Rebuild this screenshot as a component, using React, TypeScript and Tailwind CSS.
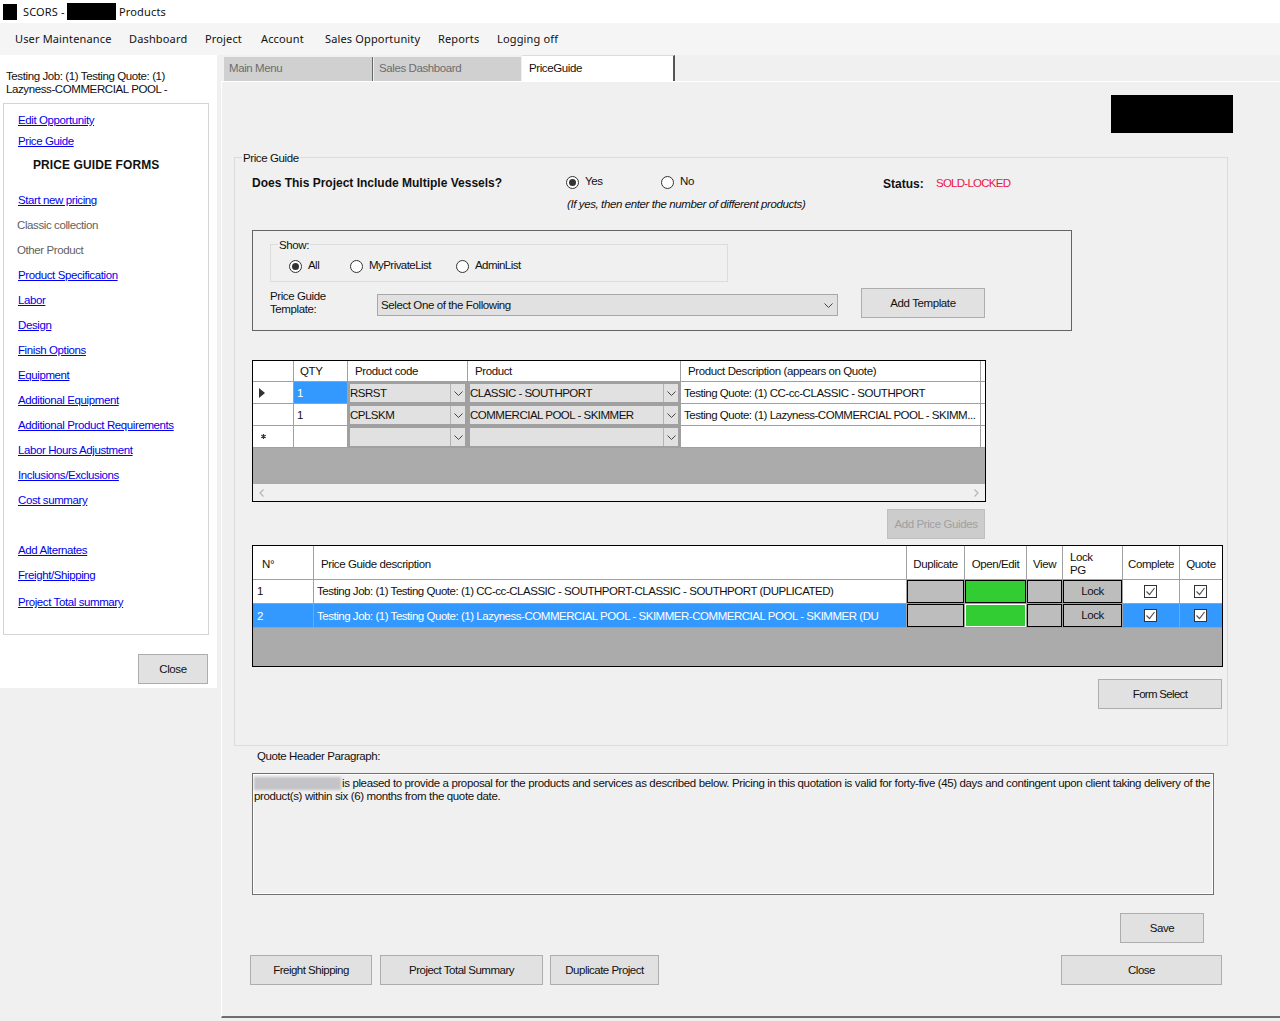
import type { ReactNode } from "react";

const menu = [
  { label: "User Maintenance", w: "w-[114px]" },
  { label: "Dashboard", w: "w-[76px]" },
  { label: "Project", w: "w-[56px]" },
  { label: "Account", w: "w-[64px]" },
  { label: "Sales Opportunity", w: "w-[113px]" },
  { label: "Reports", w: "w-[59px]" },
  { label: "Logging off", w: "w-[80px]" },
];

const linksA = [
  { t: "Start new pricing", on: true },
  { t: "Classic collection", on: false },
  { t: "Other Product", on: false },
  { t: "Product Specification", on: true },
  { t: "Labor", on: true },
  { t: "Design", on: true },
  { t: "Finish Options", on: true },
  { t: "Equipment", on: true },
  { t: "Additional Equipment", on: true },
  { t: "Additional Product Requirements", on: true },
  { t: "Labor Hours Adjustment", on: true },
  { t: "Inclusions/Exclusions", on: true },
  { t: "Cost summary", on: true },
];

function Btn({ className, children }: { className: string; children: ReactNode }) {
  return (
    <button className={"flex items-center justify-center border border-[#adadad] bg-[#e1e1e1] pt-[1px] text-[#111] " + className}>
      {children}
    </button>
  );
}

function SideLink({ t, on }: { t: string; on: boolean }) {
  if (!on) {
    return <div className="h-[25px] pl-[14px] leading-[25px] text-[#5f5f5f]">{t}</div>;
  }
  return <div className="h-[25px] pl-[15px] leading-[25px] text-[#0000ee] underline">{t}</div>;
}

function Radio({ on, label, className }: { on?: boolean; label: string; className: string }) {
  return (
    <div className={"flex h-[16px] items-center " + className}>
      <span className="flex h-[13px] w-[13px] items-center justify-center rounded-full border border-[#333] bg-white">
        {on && <span className="h-[7px] w-[7px] rounded-full bg-[#333]" />}
      </span>
      <span className="ml-[6px]">{label}</span>
    </div>
  );
}

function Chevron() {
  return (
    <svg width="9" height="5" viewBox="0 0 9 5" className="shrink-0">
      <path d="M0.5 0.5 L4.5 4.5 L8.5 0.5" fill="none" stroke="#444" strokeWidth="1" />
    </svg>
  );
}

function Combo({ text }: { text?: string }) {
  return (
    <div className="flex h-full items-stretch border-2 border-[#a0a0a0] bg-[#e1e1e1]">
      <div className="flex-1 overflow-hidden whitespace-nowrap leading-[18px] tracking-[-0.5px]">{text}</div>
      <div className="flex w-[15px] items-center justify-center border-l border-[#b4b4b4]">
        <Chevron />
      </div>
    </div>
  );
}

function Check() {
  return (
    <span className="flex h-[13px] w-[13px] items-center justify-center border border-[#333] bg-white">
      <svg width="11" height="11" viewBox="0 0 11 11">
        <path d="M1.5 5.5 L4.5 8.5 L9.5 2" fill="none" stroke="#555" strokeWidth="1.2" />
      </svg>
    </span>
  );
}

function ProductRow({
  mark,
  qty,
  selected,
  code,
  product,
  desc,
}: {
  mark?: ReactNode;
  qty?: string;
  selected?: boolean;
  code?: string;
  product?: string;
  desc?: string;
}) {
  return (
    <>
      <div className="flex items-center border-r border-b border-[#a0a0a0] bg-white pl-[6px]">{mark}</div>
      <div className={"border-r border-b border-[#a0a0a0] pl-[3px] leading-[22px] " + (selected ? "bg-[#3399ff] text-white" : "bg-white")}>{qty}</div>
      <div className="border-r border-[#a0a0a0] bg-white"><Combo text={code} /></div>
      <div className="border-r border-[#a0a0a0] bg-white"><Combo text={product} /></div>
      <div className="overflow-hidden whitespace-nowrap border-r border-b border-[#a0a0a0] bg-white pl-[3px] leading-[22px] tracking-[-0.47px]">{desc}</div>
      <div className="border-b border-[#a0a0a0] bg-white" />
    </>
  );
}

function GuideRow({ n, desc, active }: { n: string; desc: string; active?: boolean }) {
  const bg = active ? "bg-[#3399ff] text-white leading-[24px]" : "bg-white leading-[23px]";
  const wrap = "border-r border-b border-[#a0a0a0]";
  const gray = "h-full border border-black bg-[#bdbdbd]";
  return (
    <>
      <div className={"pl-[4px] " + wrap + " " + bg}>{n}</div>
      <div className={"overflow-hidden whitespace-nowrap pl-[3px] tracking-[-0.47px] " + wrap + " " + bg}>{desc}</div>
      <div className={wrap}><div className={gray} /></div>
      <div className={wrap}>
        <div className={active ? "h-full border border-white bg-[#32cd32]" : "h-full border border-black bg-[#32cd32]"} />
      </div>
      <div className={wrap}><div className={gray} /></div>
      <div className={wrap}><div className={"flex items-center justify-center " + gray}>Lock</div></div>
      <div className={"flex items-center justify-center pr-[1px] " + wrap + " " + bg}><Check /></div>
      <div className={"flex items-center justify-center border-b border-[#a0a0a0] pr-[1px] " + bg}><Check /></div>
    </>
  );
}

export default function App() {
  return (
    <div className="flex h-[1021px] w-[1280px] flex-col overflow-hidden bg-white font-['Liberation_Sans',Arial,sans-serif] text-[11.5px] tracking-[-0.4px] text-[#111]">
      {/* title bar */}
      <div className="flex h-[23px] shrink-0 items-center bg-white font-['Noto_Sans',sans-serif] text-[11px] tracking-[0.15px]">
        <div className="ml-[3px] h-[16px] w-[14px] bg-black" />
        <span className="ml-[6px] mt-[1px] w-[44px] whitespace-nowrap">SCORS -</span>
        <div className="h-[17px] w-[49px] bg-black" />
        <span className="ml-[3px] mt-[1px]">Products</span>
      </div>

      {/* menu */}
      <div className="flex h-[32px] shrink-0 items-center bg-[#f5f5f5] pl-[15px] font-['Noto_Sans',sans-serif] text-[11px] tracking-[0.15px]">
        {menu.map((m) => (
          <span key={m.label} className={"whitespace-nowrap " + m.w}>{m.label}</span>
        ))}
      </div>

      <div className="flex min-h-0 flex-1">
        {/* left side */}
        <div className="flex w-[217px] shrink-0 flex-col bg-[#f0f0f0]">
          <div className="h-[633px] bg-white">
            <div className="h-[48px] pl-[6px] pt-[15px] leading-[13px]">
              Testing Job: (1) Testing Quote: (1)
              <br />
              Lazyness-COMMERCIAL POOL -
            </div>
            <div className="ml-[3px] h-[532px] w-[206px] border border-[#d4d4d4] pt-[6px]">
              <div className="h-[21px] pl-[14px] leading-[20px] text-[#0000ee] underline">Edit Opportunity</div>
              <div className="h-[21px] pl-[14px] leading-[20px] text-[#0000ee] underline">Price Guide</div>
              <div className="mt-[3px] h-[20px] pl-[29px] text-[12px] leading-[20px] font-bold tracking-[0.1px]">PRICE GUIDE FORMS</div>
              <div className="mt-[13px] -ml-[1px]">
                {linksA.map((l) => (
                  <SideLink key={l.t} t={l.t} on={l.on} />
                ))}
              </div>
              <div className="mt-[25px] -ml-[1px]">
                <SideLink t="Add Alternates" on />
                <SideLink t="Freight/Shipping" on />
                <div className="mt-[2px]"><SideLink t="Project Total summary" on /></div>
              </div>
            </div>
            <div className="mt-[19px] ml-[138px]">
              <Btn className="h-[30px] w-[70px]">Close</Btn>
            </div>
          </div>
        </div>

        {/* right side */}
        <div className="flex min-w-0 flex-1 flex-col bg-[#f0f0f0] pl-[4px]">
          <div className="flex h-[27px] shrink-0 items-end border-b border-white pl-[3px]">
            <div className="flex h-[24px] w-[149px] items-center border-r border-[#666] bg-[#d0d0d0] pl-[5px] text-[#6d6d6d]">Main Menu</div>
            <div className="ml-[1px] flex h-[24px] w-[147px] items-center bg-[#d0d0d0] pl-[5px] text-[#6d6d6d]">Sales Dashboard</div>
            <div className="ml-[1px] flex h-[26px] w-[153px] items-center border-t border-r-2 border-t-[#dcdcdc] border-r-[#555] bg-white pt-[1px] pl-[7px]">PriceGuide</div>
          </div>

          <div className="h-[936px] shrink-0 border-b-2 border-l border-b-[#6e6e6e] border-l-white bg-[#f0f0f0]">
            <div className="mt-[13px] ml-[889px] h-[38px] w-[122px] bg-black" />

            {/* price guide group */}
            <div className="relative mt-[24px] ml-[12px] h-[589px] w-[994px] border border-[#dcdcdc] pl-[17px]">
              <span className="absolute -top-[7px] left-[7px] bg-[#f0f0f0] px-[1px] leading-[14px]">Price Guide</span>

              <div className="mt-[17px] flex h-[16px] items-center">
                <div className="w-[314px] text-[12px] font-bold tracking-normal">Does This Project Include Multiple Vessels?</div>
                <Radio on label="Yes" className="-mt-[2px] w-[95px]" />
                <Radio label="No" className="-mt-[2px] w-[222px]" />
                <div className="mt-[2px] w-[53px] text-[12px] font-bold tracking-normal">Status:</div>
                <div className="mt-[2px] tracking-[-0.75px] text-[#ea1748]">SOLD-LOCKED</div>
              </div>
              <div className="mt-[5px] ml-[315px] h-[16px] italic leading-[16px]">(If yes, then enter the number of different products)</div>

              {/* template box */}
              <div className="mt-[18px] h-[101px] w-[820px] border border-[#646464]">
                <div className="relative mt-[13px] ml-[17px] h-[38px] w-[458px] border border-[#dcdcdc] pt-[13px] pl-[18px]">
                  <span className="absolute -top-[7px] left-[7px] bg-[#f0f0f0] px-[1px] leading-[14px]">Show:</span>
                  <div className="flex tracking-[-0.55px]">
                    <Radio on label="All" className="w-[61px]" />
                    <Radio label="MyPrivateList" className="w-[106px]" />
                    <Radio label="AdminList" className="w-[100px]" />
                  </div>
                </div>
                <div className="mt-[6px] ml-[17px] flex h-[30px] items-start">
                  <div className="mt-[2px] w-[107px] leading-[13px]">
                    Price Guide
                    <br />
                    Template:
                  </div>
                  <div className="mt-[6px] flex h-[22px] w-[461px] items-center justify-between border border-[#a8a8a8] bg-[#e1e1e1] pt-[1px] pr-[4px] pl-[3px]">
                    <span>Select One of the Following</span>
                    <Chevron />
                  </div>
                  <Btn className="ml-[23px] h-[30px] w-[124px]">Add Template</Btn>
                </div>
              </div>

              {/* products grid */}
              <div className="mt-[29px] h-[142px] w-[734px] border border-black">
                <div className="grid grid-cols-[41px_54px_120px_213px_300px_4px] grid-rows-[21px_22px_22px_22px]">
                  <div className="border-r border-b border-[#a0a0a0] bg-white" />
                  <div className="border-r border-b border-[#a0a0a0] bg-white pl-[6px] leading-[20px]">QTY</div>
                  <div className="border-r border-b border-[#a0a0a0] bg-white pl-[7px] leading-[20px]">Product code</div>
                  <div className="border-r border-b border-[#a0a0a0] bg-white pl-[7px] leading-[20px]">Product</div>
                  <div className="border-r border-b border-[#a0a0a0] bg-white pl-[7px] leading-[20px]">Product Description (appears on Quote)</div>
                  <div className="border-b border-[#a0a0a0] bg-white" />
                  <ProductRow
                    mark={<svg width="6" height="10" viewBox="0 0 6 10"><path d="M0 0 L6 5 L0 10 Z" fill="#333" /></svg>}
                    qty="1"
                    selected
                    code="RSRST"
                    product="CLASSIC - SOUTHPORT"
                    desc="Testing Quote: (1) CC-cc-CLASSIC - SOUTHPORT"
                  />
                  <ProductRow qty="1" code="CPLSKM" product="COMMERCIAL POOL - SKIMMER" desc="Testing Quote: (1) Lazyness-COMMERCIAL POOL - SKIMM..." />
                  <ProductRow mark={<svg width="5" height="5" viewBox="0 0 5 5" className="ml-[2px]"><path d="M2.5 0 V5 M0.3 1.2 L4.7 3.8 M4.7 1.2 L0.3 3.8" stroke="#333" strokeWidth="1.2" /></svg>} />
                </div>
                <div className="h-[36px] bg-[#ababab]" />
                <div className="flex h-[17px] items-center justify-between bg-[#f0f0f0] px-[6px]">
                  <svg width="5" height="8" viewBox="0 0 5 8"><path d="M4.5 0.5 L1 4 L4.5 7.5" fill="none" stroke="#b5b5b5" strokeWidth="1.2" /></svg>
                  <svg width="5" height="8" viewBox="0 0 5 8"><path d="M0.5 0.5 L4 4 L0.5 7.5" fill="none" stroke="#b5b5b5" strokeWidth="1.2" /></svg>
                </div>
              </div>

              <button className="mt-[7px] ml-[635px] flex h-[30px] w-[98px] items-center justify-center border border-[#bfbfbf] bg-[#cccccc] pt-[1px] text-[#a0a0a0]">Add Price Guides</button>

              {/* price guides grid */}
              <div className="mt-[6px] h-[122px] w-[971px] border border-black">
                <div className="grid grid-cols-[61px_593px_58px_62px_36px_60px_57px_42px] grid-rows-[34px_24px_24px]">
                  <div className="border-r border-b border-[#a0a0a0] bg-white pl-[9px] leading-[36px]">N°</div>
                  <div className="border-r border-b border-[#a0a0a0] bg-white pl-[7px] leading-[36px]">Price Guide description</div>
                  <div className="border-r border-b border-[#a0a0a0] bg-white text-center leading-[36px]">Duplicate</div>
                  <div className="border-r border-b border-[#a0a0a0] bg-white text-center leading-[36px]">Open/Edit</div>
                  <div className="border-r border-b border-[#a0a0a0] bg-white text-center leading-[36px]">View</div>
                  <div className="border-r border-b border-[#a0a0a0] bg-white pt-[5px] pl-[7px] leading-[13px]">Lock<br />PG</div>
                  <div className="border-r border-b border-[#a0a0a0] bg-white text-center leading-[36px]">Complete</div>
                  <div className="border-b border-[#a0a0a0] bg-white text-center leading-[36px]">Quote</div>
                  <GuideRow n="1" desc="Testing Job: (1) Testing Quote: (1) CC-cc-CLASSIC - SOUTHPORT-CLASSIC - SOUTHPORT (DUPLICATED)" />
                  <GuideRow active n="2" desc="Testing Job: (1) Testing Quote: (1) Lazyness-COMMERCIAL POOL - SKIMMER-COMMERCIAL POOL - SKIMMER (DU" />
                </div>
                <div className="h-[38px] bg-[#ababab]" />
              </div>

              <Btn className="mt-[12px] ml-[846px] h-[30px] w-[124px] tracking-[-0.7px]">Form Select</Btn>
            </div>

            {/* quote header */}
            <div className="mt-[2px] ml-[35px] h-[16px] leading-[16px]">Quote Header Paragraph:</div>
            <div className="mt-[9px] ml-[30px] h-[122px] w-[962px] border border-[#707070] bg-[#f0f0f0] px-[1px] py-[3px] leading-[13px] tracking-[-0.37px] shadow-[inset_0_0_0_1px_white]">
              <span className="mr-[1px] inline-block h-[13px] w-[87px] bg-[#c4c4c8] align-top blur-[1px]" />
              is pleased to provide a proposal for the products and services as described below. Pricing in this quotation is valid for forty-five (45) days and contingent upon client taking delivery of the product(s) within six (6) months from the quote date.
            </div>

            <Btn className="mt-[18px] ml-[898px] h-[30px] w-[84px]">Save</Btn>

            <div className="mt-[12px] ml-[28px] flex tracking-[-0.5px]">
              <Btn className="h-[30px] w-[122px]">Freight Shipping</Btn>
              <Btn className="ml-[8px] h-[30px] w-[163px]">Project Total Summary</Btn>
              <Btn className="ml-[7px] h-[30px] w-[109px]">Duplicate Project</Btn>
              <Btn className="ml-[402px] h-[30px] w-[161px]">Close</Btn>
            </div>
          </div>
        </div>
      </div>
    </div>
  );
}
